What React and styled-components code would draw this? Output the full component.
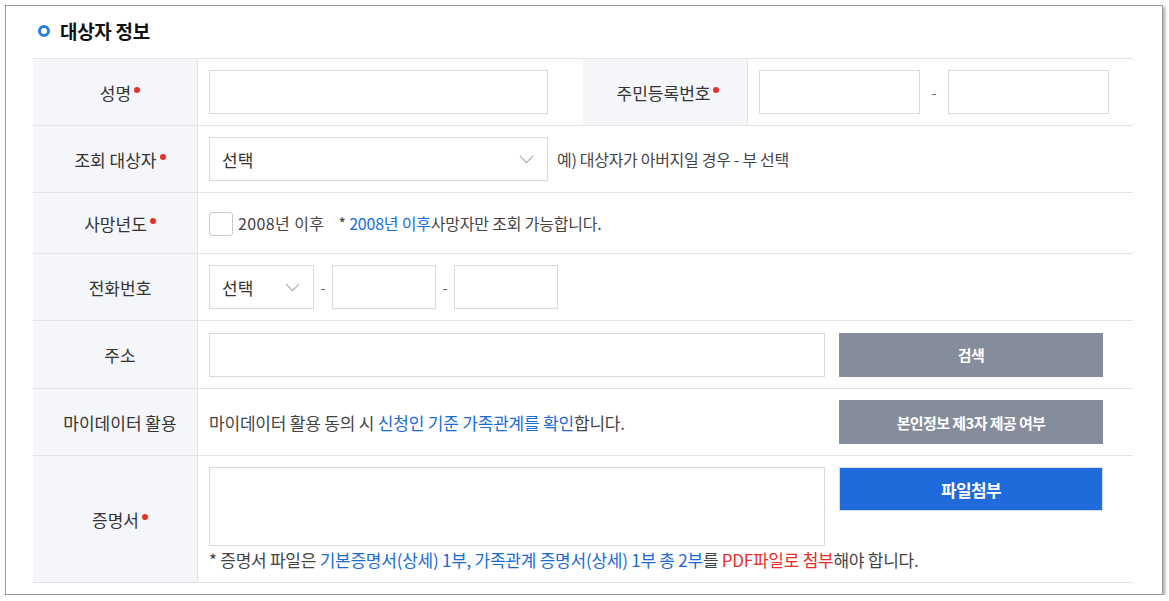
import React from 'react';
import styled, { createGlobalStyle } from 'styled-components';

const GlobalStyle = createGlobalStyle`
    html, body {
        margin: 0;
        padding: 0;
        background: #ffffff;
    }
    body {
        font-family: "Noto Sans CJK KR", "Noto Sans", sans-serif;
        color: #333333;
    }
    * {
        box-sizing: border-box;
    }
`;

const Frame = styled.div`
    margin: 5px 0 0 5px;
    width: 1158px;
    height: 590px;
    border: 1px solid #9a9a9a;
    box-shadow: 2px 2px 3px rgba(0, 0, 0, 0.35);
    padding: 0 0 0 27px;
    background: #fff;
`;

const TitleRow = styled.div`
    display: flex;
    align-items: center;
    height: 52px;
    padding-left: 5px;
    padding-bottom: 3px;
`;

const TitleDot = styled.span`
    width: 12px;
    height: 12px;
    border-radius: 50%;
    border: 3px solid #2a7de1;
    margin-right: 10px;
    margin-top: 1px;
`;

const Title = styled.h2`
    margin: 0;
    font-size: 19px;
    font-weight: 700;
    color: #111;
    letter-spacing: -0.3px;
`;

const Table = styled.div`
    width: 1100px;
    border-top: 1px solid #e3e3e3;
`;

const Row = styled.div`
    display: flex;
    height: ${p => p.$h}px;
    border-bottom: 1px solid #e3e3e3;
`;

const Label = styled.div`
    flex: 0 0 ${p => p.$w || 165}px;
    background: #f5f6fa;
    border-right: 1px solid #e3e3e3;
    display: flex;
    align-items: center;
    justify-content: center;
    padding-left: ${p => p.$pl ?? 10}px;
    font-size: 17px;
    color: #333;
`;

const Required = styled.span`
    white-space: nowrap;
    &::after {
        content: "";
        display: inline-block;
        width: 6px;
        height: 6px;
        border-radius: 50%;
        background: #e8302b;
        margin-left: 3px;
        vertical-align: 7px;
    }
`;

const Cell = styled.div`
    flex: ${p => (p.$w ? `0 0 ${p.$w}px` : '1')};
    display: flex;
    flex-direction: ${p => (p.$column ? 'column' : 'row')};
    align-items: ${p => (p.$column ? 'flex-start' : 'center')};
    padding: ${p => p.$pad || '0 0 0 11px'};
`;

const UploadLine = styled.div`
    display: flex;
    align-items: flex-start;
    gap: 14px;
`;

const Input = styled.div`
    width: ${p => p.$w}px;
    height: 44px;
    border: 1px solid #d9d9d9;
    background: #fff;
    flex-shrink: 0;
`;

const TextArea = styled.div`
    width: 616px;
    height: 79px;
    border: 1px solid #d9d9d9;
    background: #fff;
`;

const Select = styled.div`
    width: ${p => p.$w}px;
    height: 44px;
    border: 1px solid #d9d9d9;
    background: #fff;
    display: flex;
    align-items: center;
    justify-content: space-between;
    padding: 0 13px 0 12px;
    font-size: 17px;
    color: #333;
    flex-shrink: 0;
`;

const Dash = styled.span`
    width: ${p => p.$w}px;
    text-align: center;
    font-size: 15px;
    color: #666;
`;

const Text = styled.span`
    font-size: ${p => p.$size || 16}px;
    letter-spacing: ${p => p.$ls || 0}px;
    color: #444;
    margin-left: ${p => p.$ml || 0}px;
    margin-top: ${p => p.$mt || 0}px;
    width: ${p => (p.$w ? `${p.$w}px` : 'auto')};
    white-space: nowrap;
`;

const Blue = styled.span`
    color: #1a6bd6;
`;

const Red = styled.span`
    color: #e3302a;
`;

const Checkbox = styled.span`
    width: 24px;
    height: 24px;
    border: 1px solid #c9c9c9;
    border-radius: 3px;
    background: #fff;
    margin-right: 5px;
    margin-top: 1px;
`;

const Button = styled.div`
    width: 264px;
    height: 44px;
    margin-left: ${p => p.$ml || 0}px;
    background: ${p => (p.$primary ? '#1f6bdb' : '#858d9c')};
    border: ${p => (p.$primary ? '1px solid #d7dde8' : 'none')};
    color: #fff;
    font-size: ${p => (p.$primary ? 17 : 15)}px;
    font-weight: 700;
    letter-spacing: -0.6px;
    display: flex;
    align-items: center;
    justify-content: center;
    flex-shrink: 0;
`;

const Chevron = () => (
    <svg width="15" height="9" viewBox="0 0 15 9" fill="none">
        <path d="M1 1l6.5 6.5L14 1" stroke="#b5b5b5" strokeWidth="1.3" />
    </svg>
);

export default function App() {
    return (
        <>
            <GlobalStyle />
            <Frame>
                <TitleRow>
                    <TitleDot />
                    <Title>대상자 정보</Title>
                </TitleRow>
                <Table>
                    <Row $h={67}>
                        <Label><Required>성명</Required></Label>
                        <Cell $w={385}>
                            <Input $w={339} />
                        </Cell>
                        <Label $pl={6}><Required>주민등록번호</Required></Label>
                        <Cell>
                            <Input $w={161} />
                            <Dash $w={28}>-</Dash>
                            <Input $w={161} />
                        </Cell>
                    </Row>
                    <Row $h={67}>
                        <Label><Required>조회 대상자</Required></Label>
                        <Cell>
                            <Select $w={339}>선택<Chevron /></Select>
                            <Text $ml={9} $ls={-0.3}>예) 대상자가 아버지일 경우 - 부 선택</Text>
                        </Cell>
                    </Row>
                    <Row $h={61}>
                        <Label><Required>사망년도</Required></Label>
                        <Cell>
                            <Checkbox />
                            <Text $ls={0.4}>2008년 이후</Text>
                            <Text $ml={14} $ls={-0.2}>* <Blue>2008년 이후</Blue>사망자만 조회 가능합니다.</Text>
                        </Cell>
                    </Row>
                    <Row $h={67}>
                        <Label>전화번호</Label>
                        <Cell>
                            <Select $w={105}>선택<Chevron /></Select>
                            <Dash $w={18}>-</Dash>
                            <Input $w={104} />
                            <Dash $w={18}>-</Dash>
                            <Input $w={104} />
                        </Cell>
                    </Row>
                    <Row $h={68}>
                        <Label>주소</Label>
                        <Cell>
                            <Input $w={616} />
                            <Button $ml={14}>검색</Button>
                        </Cell>
                    </Row>
                    <Row $h={67}>
                        <Label>마이데이터 활용</Label>
                        <Cell>
                            <Text $size={17} $ls={-0.2} $w={630}>
                                마이데이터 활용 동의 시 <Blue>신청인 기준 가족관계를 확인</Blue>합니다.
                            </Text>
                            <Button>본인정보 제3자 제공 여부</Button>
                        </Cell>
                    </Row>
                    <Row $h={127}>
                        <Label><Required>증명서</Required></Label>
                        <Cell $column $pad="11px 0 0 11px">
                            <UploadLine>
                                <TextArea />
                                <Button $primary>파일첨부</Button>
                            </UploadLine>
                            <Text $size={17} $ls={-0.25} $mt={1}>
                                * 증명서 파일은 <Blue>기본증명서(상세) 1부, 가족관계 증명서(상세) 1부 총 2부</Blue>를 <Red>PDF파일로 첨부</Red>해야 합니다.
                            </Text>
                        </Cell>
                    </Row>
                </Table>
            </Frame>
        </>
    );
}
